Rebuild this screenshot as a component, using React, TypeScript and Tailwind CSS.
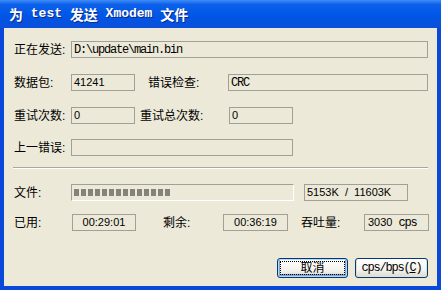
import type { ReactNode } from "react";

const label = "text-[12px] leading-none text-black font-['Liberation_Sans','Noto_Sans_CJK_SC',sans-serif] shrink-0";
const num = "text-[11px] leading-none text-black font-['Liberation_Sans',sans-serif]";
const mono = "text-[12px] leading-none tracking-[-1.2px] text-black font-['Liberation_Mono','Noto_Sans_CJK_SC',monospace]";
const titleCjk = "text-[14px] font-['Noto_Sans_CJK_SC',sans-serif]";

function Box({ className, children }: { className: string; children?: ReactNode }) {
  return (
    <div className={`h-[17px] shrink-0 flex items-center border border-[#a09f99] ${className}`}>
      {children}
    </div>
  );
}

function XpButton({ focused, className, children }: { focused?: boolean; className: string; children: ReactNode }) {
  return (
    <div
      className={`h-[20px] flex items-center justify-center rounded-[3px] border border-[#003c74] bg-[linear-gradient(to_bottom,#ffffff_0%,#f4f3ee_60%,#dcd8cc_100%)] ${
        focused
          ? "shadow-[inset_0_0_0_1px_#bcd4f6,inset_0_-1px_0_2px_#7da2ce] [outline:1px_dotted_#000] [outline-offset:-4px]"
          : "shadow-[inset_0_-1px_0_1px_#e3dfd4]"
      } ${className}`}
    >
      {children}
    </div>
  );
}

export default function App() {
  const blocks = Array.from({ length: 14 });

  return (
    <div className="w-[441px] h-[292px] bg-white overflow-hidden">
      <div className="flex h-[290px] flex-col bg-[#0a48da]">
        {/* 标题栏 */}
        <div className="h-[28px] shrink-0 flex items-center pl-[9px] bg-[linear-gradient(to_bottom,#3f8cf7_0%,#0c60ea_16%,#0056e6_55%,#0a4fd8_100%)]">
          <span className="flex items-center text-[13px] font-bold text-white whitespace-pre [text-shadow:1px_1px_0_#0a2a8a] font-['Liberation_Mono','Noto_Sans_CJK_SC',monospace]">
            <span className={titleCjk}>为</span> test <span className={titleCjk}>发送</span> Xmodem <span className={titleCjk}>文件</span>
          </span>
        </div>

        {/* 客户区 */}
        <div className="mx-[4px] mb-[4px] flex-1 flex flex-col bg-[#ece9d8] pl-[10px]">
          {/* 正在发送 */}
          <div className="mt-[13px] flex items-center">
            <span className={`${label} w-[57px]`}>正在发送:</span>
            <Box className="w-[357px] pl-[2px]">
              <span className={mono}>D:\update\main.bin</span>
            </Box>
          </div>

          {/* 数据包 / 错误检查 */}
          <div className="mt-[16px] flex items-center">
            <span className={`${label} w-[57px]`}>数据包:</span>
            <Box className="w-[64px] pl-[2px]">
              <span className={num}>41241</span>
            </Box>
            <span className={`${label} ml-[13px] w-[80px]`}>错误检查:</span>
            <Box className="w-[200px] pl-[2px]">
              <span className={mono}>CRC</span>
            </Box>
          </div>

          {/* 重试 */}
          <div className="mt-[16px] flex items-center">
            <span className={`${label} w-[57px]`}>重试次数:</span>
            <Box className="w-[64px] pl-[2px]">
              <span className={num}>0</span>
            </Box>
            <span className={`${label} ml-[5px] w-[89px]`}>重试总次数:</span>
            <Box className="w-[64px] pl-[2px]">
              <span className={num}>0</span>
            </Box>
          </div>

          {/* 上一错误 */}
          <div className="mt-[15px] flex items-center">
            <span className={`${label} w-[57px]`}>上一错误:</span>
            <Box className="w-[222px]" />
          </div>

          {/* 分隔线 */}
          <div className="mt-[11px] ml-[-1px] w-[415px] h-[2px] border-t border-[#aca899] border-b border-b-white" />

          {/* 文件进度 */}
          <div className="mt-[15px] flex items-center">
            <span className={`${label} w-[57px]`}>文件:</span>
            <div className="h-[17px] w-[223px] shrink-0 flex items-center gap-[2px] pl-[2px] border border-t-[#a09f99] border-l-[#a09f99] border-b-white border-r-white">
              {blocks.map((_, i) => (
                <div key={i} className="w-[5px] h-[7px] bg-[#83837a]" />
              ))}
            </div>
            <Box className="ml-[10px] w-[104px] pl-[2px]">
              <span className={`${num} whitespace-pre`}>5153K  /  11603K</span>
            </Box>
          </div>

          {/* 时间 / 吞吐量 */}
          <div className="mt-[13px] flex items-center">
            <span className={`${label} w-[58px]`}>已用:</span>
            <Box className="w-[64px] justify-center">
              <span className={num}>00:29:01</span>
            </Box>
            <span className={`${label} ml-[27px] w-[60px]`}>剩余:</span>
            <Box className="w-[65px] justify-center">
              <span className={num}>00:36:19</span>
            </Box>
            <span className={`${label} ml-[13px] w-[63px]`}>吞吐量:</span>
            <Box className="w-[65px] pl-[3px]">
              <span className={num}>3030</span>
              <span className={`${mono} ml-[6px]`}>cps</span>
            </Box>
          </div>

          {/* 按钮 */}
          <div className="mt-[27px] flex justify-end gap-[7px] pr-[9px]">
            <XpButton focused className="w-[71px]">
              <span className={label}>取消</span>
            </XpButton>
            <XpButton className="w-[73px]">
              <span className={mono}>
                cps/bps(<span className="underline">C</span>)
              </span>
            </XpButton>
          </div>
        </div>
      </div>
    </div>
  );
}
